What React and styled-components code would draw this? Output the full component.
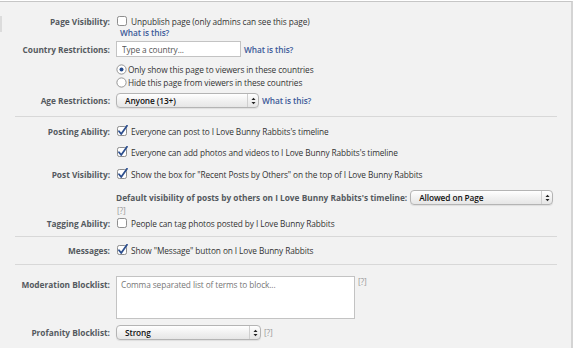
import React from "react";
import styled, { createGlobalStyle } from "styled-components";

const Global = createGlobalStyle`
  html, body { margin: 0; padding: 0; background: #ffffff; }
  * { box-sizing: border-box; }
`;

const Panel = styled.div`
  width: 573px;
  height: 347px;
  margin-top: 1px;
  border-top: 1px solid #c6c6c6;
  border-right: 2px solid #d4d4d4;
  background: #f2f2f2;
  padding: 0 14px 0 15px;
  font-family: "Open Sans", "DejaVu Sans", sans-serif;
  font-size: 8.3px;
  letter-spacing: -0.1px;
  color: #333333;
  overflow: hidden;
`;

const Section = styled.div`
  padding: ${(p) => p.$pad};
  border-bottom: ${(p) => (p.$divider ? "1px solid #d8d8d8" : "none")};
`;

const Row = styled.div`
  display: grid;
  grid-template-columns: 95px 1fr;
  column-gap: 6px;
  align-items: ${(p) => (p.$top ? "start" : "center")};
  margin-top: ${(p) => p.$mt || 0}px;
  min-height: ${(p) => p.$h || 12}px;
`;

const Label = styled.div`
  text-align: right;
  font-weight: bold;
  letter-spacing: 0;
  color: #555a60;
  white-space: nowrap;
  line-height: 11px;
  padding-top: ${(p) => p.$pt || 0}px;
`;

const Content = styled.div`
  display: flex;
  align-items: ${(p) => (p.$top ? "flex-start" : "center")};
  gap: ${(p) => p.$gap ?? 3}px;
  white-space: nowrap;
  line-height: 11px;
`;

const Link = styled.a`
  color: #3b5998;
  font-weight: 600;
  text-decoration: none;
  padding-left: ${(p) => p.$pl || 0}px;
`;

const Help = styled.span`
  color: #999999;
  padding-left: ${(p) => p.$pl || 0}px;
`;

const Strong = styled.span`
  font-weight: bold;
  letter-spacing: 0;
  color: #555a60;
`;

const TextInput = styled.input`
  width: 125px;
  height: 16px;
  border: 1px solid #c3c3c3;
  background: #fff;
  padding: 0 5px;
  font-family: inherit;
  font-size: inherit;
  letter-spacing: inherit;
  color: #333;
  margin: 0;
  &::placeholder { color: #555; }
`;

const TextArea = styled.textarea`
  width: 239px;
  height: 43px;
  border: 1px solid #c3c3c3;
  background: #fff;
  padding: 2px 4px;
  font-family: inherit;
  font-size: inherit;
  letter-spacing: inherit;
  resize: none;
  margin: 0;
  &::placeholder { color: #777; }
`;

const SelectBox = styled.div`
  width: ${(p) => p.$w}px;
  height: 15px;
  border: 1px solid #b4b4b4;
  border-radius: 4px;
  background: linear-gradient(#ffffff, #f0f0f0 55%, #e6e6e6);
  box-shadow: 0 1px 1px rgba(0, 0, 0, 0.08);
  display: flex;
  align-items: center;
  color: #111;
  padding-left: 8px;
  font-weight: 600;
`;

const SelectText = styled.span`
  flex: 1;
`;

const SelectArrows = styled.span`
  width: 11px;
  height: 100%;
  border-left: 1px solid #cfcfcf;
  display: flex;
  align-items: center;
  justify-content: center;
`;

const Choice = styled.label`
  display: flex;
  align-items: center;
  gap: ${(p) => p.$gap ?? 3}px;
  white-space: nowrap;
`;

const Check = ({ checked }) => (
  <svg width="12" height="12" viewBox="0 0 12 12">
    <rect x="1.5" y="1.5" width="9" height="9" rx="1.8" fill="#fff" stroke="#8e8e8e" strokeWidth="1" />
    {checked && (
      <path d="M3 6.2 L5.2 9 L11 0.8" fill="none" stroke="#2d4f8e" strokeWidth="1.8" strokeLinecap="round" strokeLinejoin="round" />
    )}
  </svg>
);

const Radio = ({ checked }) => (
  <svg width="11" height="11" viewBox="0 0 11 11">
    <circle cx="5.5" cy="5.5" r="4.6" fill="#fff" stroke="#8a8a8a" strokeWidth="0.9" />
    {checked && <circle cx="5.5" cy="5.5" r="2" fill="#254a8a" />}
  </svg>
);

const Arrows = () => (
  <svg width="5" height="8" viewBox="0 0 5 8">
    <path d="M0.5 3 L2.5 0.8 L4.5 3 Z" fill="#222" />
    <path d="M0.5 5 L2.5 7.2 L4.5 5 Z" fill="#222" />
  </svg>
);

const Select = ({ w, value }) => (
  <SelectBox $w={w}>
    <SelectText>{value}</SelectText>
    <SelectArrows>
      <Arrows />
    </SelectArrows>
  </SelectBox>
);

const Edge = styled.div`
  position: absolute;
  left: 0;
  top: 15px;
  width: 2px;
  height: 16px;
  background: #dcdcdc;
`;

const Wrap = styled.div`
  position: relative;
`;

export default function App() {
  return (
    <Wrap>
      <Global />
      <Edge />
      <Panel>
        <Section $divider $pad="13px 0 8px">
          <Row>
            <Label>Page Visibility:</Label>
            <Content>
              <Choice>
                <Check />
                Unpublish page (only admins can see this page)
              </Choice>
            </Content>
          </Row>
          <Row $h={11}>
            <span />
            <Content>
              <Link $pl={4}>What is this?</Link>
            </Content>
          </Row>
          <Row $mt={3} $h={16}>
            <Label>Country Restrictions:</Label>
            <Content>
              <TextInput placeholder="Type a country..." />
              <Link>What is this?</Link>
            </Content>
          </Row>
          <Row $mt={6}>
            <span />
            <Content>
              <Choice $gap={1}>
                <Radio checked />
                Only show this page to viewers in these countries
              </Choice>
            </Content>
          </Row>
          <Row $mt={1}>
            <span />
            <Content>
              <Choice $gap={1}>
                <Radio />
                Hide this page from viewers in these countries
              </Choice>
            </Content>
          </Row>
          <Row $mt={5} $h={15}>
            <Label>Age Restrictions:</Label>
            <Content>
              <Select w={143} value="Anyone (13+)" />
              <Link>What is this?</Link>
            </Content>
          </Row>
        </Section>

        <Section $divider $pad="8px 0 7px">
          <Row>
            <Label>Posting Ability:</Label>
            <Content>
              <Choice>
                <Check checked />
                Everyone can post to I Love Bunny Rabbits's timeline
              </Choice>
            </Content>
          </Row>
          <Row $mt={9}>
            <span />
            <Content>
              <Choice>
                <Check checked />
                Everyone can add photos and videos to I Love Bunny Rabbits's timeline
              </Choice>
            </Content>
          </Row>
          <Row $mt={10}>
            <Label>Post Visibility:</Label>
            <Content>
              <Choice>
                <Check checked />
                Show the box for "Recent Posts by Others" on the top of I Love Bunny Rabbits
              </Choice>
            </Content>
          </Row>
          <Row $mt={10} $h={15}>
            <span />
            <Content>
              <Strong>Default visibility of posts by others on I Love Bunny Rabbits's timeline:</Strong>
              <Select w={143} value="Allowed on Page" />
            </Content>
          </Row>
          <Row $h={11}>
            <span />
            <Content>
              <Help $pl={1}>[?]</Help>
            </Content>
          </Row>
          <Row $mt={1}>
            <Label>Tagging Ability:</Label>
            <Content>
              <Choice>
                <Check />
                People can tag photos posted by I Love Bunny Rabbits
              </Choice>
            </Content>
          </Row>
        </Section>

        <Section $divider $pad="7px 0 8px">
          <Row>
            <Label>Messages:</Label>
            <Content>
              <Choice>
                <Check checked />
                Show "Message" button on I Love Bunny Rabbits
              </Choice>
            </Content>
          </Row>
        </Section>

        <Section $pad="11px 0 0">
          <Row $top $h={43}>
            <Label $pt={3}>Moderation Blocklist:</Label>
            <Content $top>
              <TextArea placeholder="Comma separated list of terms to block..." />
              <Help>[?]</Help>
            </Content>
          </Row>
          <Row $mt={6} $h={15}>
            <Label>Profanity Blocklist:</Label>
            <Content>
              <Select w={145} value="Strong" />
              <Help>[?]</Help>
            </Content>
          </Row>
        </Section>
      </Panel>
    </Wrap>
  );
}
